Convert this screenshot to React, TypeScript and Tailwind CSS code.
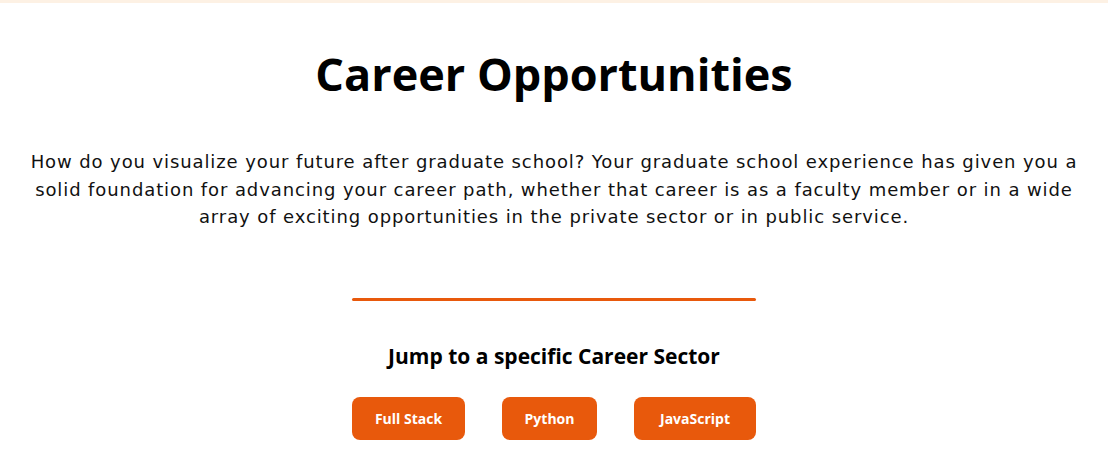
import React from "react";

export default function App() {
  const font = { fontFamily: '"Open Sans", "Liberation Sans", sans-serif' };
  return (
    <div className="min-h-[470px] bg-white" style={font}>
      <div className="h-[3px] bg-[#fdf1e4]" />
      <div className="flex flex-col items-center">
        <h1 className="mt-[41px] text-[45px] font-bold leading-[60px] text-black">
          Career Opportunities
        </h1>
        <p className="mt-[44px] w-[1080px] text-center text-[18px] leading-[27.5px] tracking-[0.9px] text-[#111] [font-family:'DejaVu_Sans',sans-serif]">
          How do you visualize your future after graduate school? Your graduate school experience has given you a
          <br />
          solid foundation for advancing your career path, whether that career is as a faculty member or in a wide
          <br />
          array of exciting opportunities in the private sector or in public service.
        </p>
        <div className="mt-[67px] h-[3px] w-[404px] rounded-full bg-[#e8590c]" />
        <h2 className="mt-[41px] text-[21px] font-bold leading-[28px] text-black">
          Jump to a specific Career Sector
        </h2>
        <div className="mt-[27px] flex gap-[37px]">
          <button className="h-[43px] w-[113px] rounded-[8px] bg-[#e8590c] text-[14px] font-bold text-white">Full Stack</button>
          <button className="h-[43px] w-[95px] rounded-[8px] bg-[#e8590c] text-[14px] font-bold text-white">Python</button>
          <button className="h-[43px] w-[122px] rounded-[8px] bg-[#e8590c] text-[14px] font-bold text-white">JavaScript</button>
        </div>
      </div>
    </div>
  );
}
